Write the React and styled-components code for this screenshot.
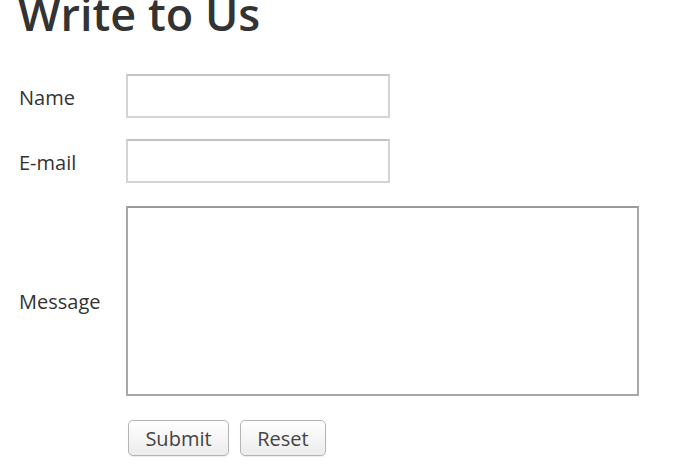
import React from "react";
import styled, { createGlobalStyle } from "styled-components";

const Global = createGlobalStyle`
  html, body { margin: 0; padding: 0; background: #fff; }
  body { font-family: "Open Sans", "DejaVu Sans", sans-serif; color: #333; overflow: hidden; }
`;

const Page = styled.div`
  padding: 0 0 0 19px;
  width: 680px;
  height: 474px;
  box-sizing: border-box;
  overflow: hidden;
`;

const Title = styled.h1`
  margin: -12px 0 0 -1px;
  font-size: 45px;
  font-weight: 600;
  line-height: 52px;
  color: #333;
  letter-spacing: 0;
`;

const Form = styled.form`
  display: grid;
  grid-template-columns: 107px auto;
  row-gap: 21px;
  margin-top: 34px;
  align-items: center;
`;

const Label = styled.label`
  font-size: 20px;
  color: #333;
  padding-top: 3px;
`;

const Input = styled.input`
  box-sizing: border-box;
  width: 264px;
  height: 44px;
  border: 2px solid #d4d4d4;
  border-top-color: #c4c4c4;
  background: #fff;
  margin: 0;
  padding: 0 6px;
  font: inherit;
`;

const TextArea = styled.textarea`
  box-sizing: border-box;
  width: 513px;
  height: 190px;
  border: 2px solid #a8a8a8;
  border-top-color: #999;
  background: #fff;
  margin: 2px 0 0;
  resize: none;
  font: inherit;
`;

const Buttons = styled.div`
  grid-column: 2;
  display: flex;
  gap: 11px;
  padding-left: 2px;
  margin-top: 3px;
`;

const Button = styled.button`
  box-sizing: border-box;
  height: 36px;
  width: ${(p) => p.w}px;
  border: 1.5px solid #b4b4b4;
  border-radius: 5px;
  background: linear-gradient(#ffffff, #ececec);
  font-family: "Open Sans", "DejaVu Sans", sans-serif;
  font-size: 20px;
  color: #444;
  padding: 0;
  box-shadow: 0 1px 1px rgba(0,0,0,0.08);
`;

export default function App() {
  return (
    <>
      <Global />
      <Page>
        <Title>Write to Us</Title>
        <Form onSubmit={(e) => e.preventDefault()}>
          <Label htmlFor="name">Name</Label>
          <Input id="name" type="text" />
          <Label htmlFor="email">E-mail</Label>
          <Input id="email" type="text" />
          <Label htmlFor="msg">Message</Label>
          <TextArea id="msg" />
          <Buttons>
            <Button w={101} type="submit">Submit</Button>
            <Button w={86} type="reset">Reset</Button>
          </Buttons>
        </Form>
      </Page>
    </>
  );
}
